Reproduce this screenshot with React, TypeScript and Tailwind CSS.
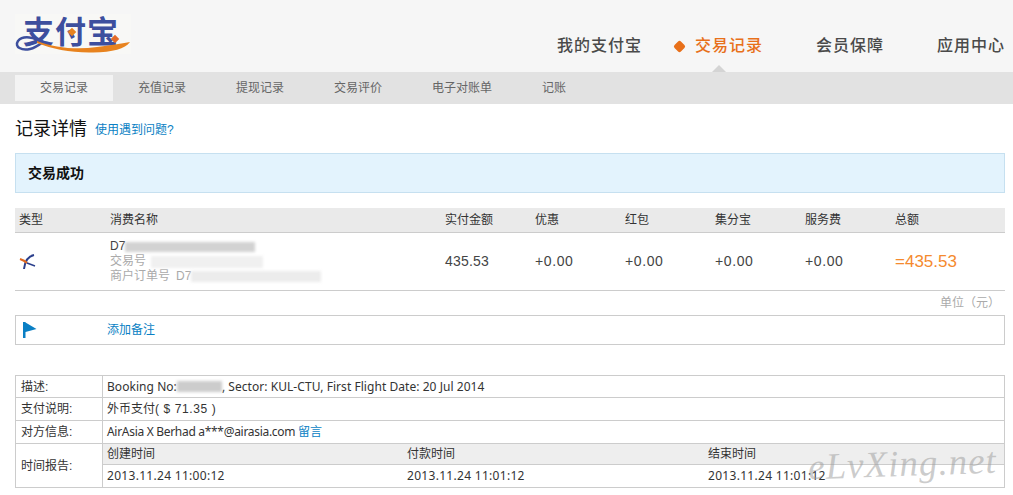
const font = { fontFamily: '"Liberation Sans", "Noto Sans CJK SC", sans-serif' };
const latin = { fontFamily: '"Noto Sans", "Noto Sans CJK SC", sans-serif' };

const tabs = ["交易记录", "充值记录", "提现记录", "交易评价", "电子对账单", "记账"];
const heads = ["类型", "消费名称", "实付金额", "优惠", "红包", "集分宝", "服务费", "总额"];
const colWidths = "grid-cols-[95px_335px_90px_90px_90px_90px_90px_1fr]";

function Logo() {
  return (
    <div className="relative h-[40px] w-[116px] bg-[#f8f8f6]">
      <span className="absolute left-[8px] top-[1px] text-[31px] leading-[36px] font-bold tracking-[1px] text-[#3d4f9e]">支付宝</span>
      <svg viewBox="0 0 116 40" className="absolute left-0 top-0 h-[40px] w-[116px]">
        <path d="M27 29 C20 23 8 21 3 27 C-1 33 7 37 15 35 C20 34 24 31 28 28" fill="none" stroke="#3d4f9e" strokeWidth="2.500" />
        <path d="M22 27 C40 34 62 36 82 33 C95 31 106 30 115 28 C110 35 98 38 78 38.500 C56 39 38 35 22 29 Z" fill="#e8831f" />
        <rect x="54" y="15" width="6" height="6" transform="rotate(45 57 18)" fill="#e8831f" />
        <rect x="97" y="22" width="6" height="6" transform="rotate(45 100 25)" fill="#e26a28" />
      </svg>
    </div>
  );
}

function Blur({ className }: { className: string }) {
  return <span className={"inline-block blur-[1.5px] " + className} />;
}

function AirIcon() {
  return (
    <svg viewBox="0 0 18 18" className="h-[18px] w-[18px]">
      <path d="M15 2 C10 3 6 7 5 16" fill="none" stroke="#2b3f8c" strokeWidth="2" />
      <path d="M1 6 C4 7 6 8 8 10" fill="none" stroke="#e06a20" strokeWidth="2" />
      <path d="M8 10 L16 13" fill="none" stroke="#2b3f8c" strokeWidth="1.500" />
    </svg>
  );
}

function FlagIcon() {
  return (
    <svg viewBox="0 0 14 16" className="h-[16px] w-[14px]">
      <path d="M0 0 H2.500 V16 H0 Z M2.500 0.500 L13.500 7 L2.500 10 Z" fill="#0a7fc4" />
    </svg>
  );
}

export default function App() {
  return (
    <div style={font} className="relative h-[495px] w-[1013px] overflow-hidden bg-white text-[12px] text-[#333]">
      <header className="relative flex h-[72px] items-start justify-between bg-[#f6f6f6] pl-[15px] pr-[8px]">
        <div className="pt-[14px]"><Logo /></div>
        <nav className="flex items-center pt-[36px] text-[16px] leading-[20px] tracking-[1px] text-[#4a4a4a] font-medium">
          <span>我的支付宝</span>
          <span className="ml-[33px] h-[9px] w-[9px] rotate-45 rounded-[2px] bg-[#e8701a]" />
          <span className="ml-[11px] text-[#e8701a]">交易记录</span>
          <span className="ml-[53px]">会员保障</span>
          <span className="ml-[53px]">应用中心</span>
        </nav>
        <span className="absolute left-[712px] top-[65px] h-0 w-0 border-x-[7px] border-b-[7px] border-x-transparent border-b-[#d4d4d4]" />
      </header>

      <div className="flex h-[32px] items-center bg-[#e2e2e2] pl-[15px] text-[#666]">
        {tabs.map((t, i) => (
          <div key={t} className={"flex h-[26px] items-center px-[25px] " + (i === 0 ? "bg-[#f3f3f3]" : "")}>{t}</div>
        ))}
      </div>

      <main className="pl-[15px] pr-[8px]">
        <div className="flex h-[49px] items-center pt-[2px]">
          <h1 className="text-[18px] font-normal text-[#111]">记录详情</h1>
          <a className="ml-[8px] pt-[1px] text-[#0a7fc4]">使用遇到问题?</a>
        </div>

        <div className="flex h-[40px] items-center border border-[#c6e0f0] bg-[#e3f3fd] pl-[12px] text-[14px] font-bold text-[#111]">交易成功</div>

        <div className={"mt-[15px] grid h-[25px] items-center border-b border-[#ccc] bg-[#eaeaea] " + colWidths}>
          {heads.map((h, i) => (
            <div key={h} className={i === 0 ? "pl-[4px]" : ""}>{h}</div>
          ))}
        </div>

        <div className={"grid h-[58px] items-center border-b border-[#ccc] text-[14px] text-[#444] " + colWidths}>
          <div className="pl-[4px]"><AirIcon /></div>
          <div className="text-[12px] leading-[15px] text-[#aaa]">
            <div className="flex items-center text-[#444]">D7<Blur className="h-[10px] w-[130px] bg-[#d2d2d2]" /></div>
            <div className="flex items-center">交易号<Blur className="ml-[5px] h-[12px] w-[112px] bg-[#f0f0f0]" /></div>
            <div className="flex items-center">商户订单号<span className="ml-[6px]">D7</span><Blur className="h-[11px] w-[130px] bg-[#ececec]" /></div>
          </div>
          <div className="tracking-[0.2px]">435.53</div>
          <div className="tracking-[0.6px]">+0.00</div>
          <div className="tracking-[0.6px]">+0.00</div>
          <div className="tracking-[0.6px]">+0.00</div>
          <div className="tracking-[0.6px]">+0.00</div>
          <div className="text-[17px] text-[#f58a2e]">=435.53</div>
        </div>

        <div className="flex h-[24px] items-center justify-end pr-[5px] text-[#aaa]">单位（元）</div>

        <div className="flex h-[30px] items-center border border-[#ccc] pl-[7px]">
          <FlagIcon />
          <a className="ml-[70px] text-[#0a7fc4]">添加备注</a>
        </div>

        <table className="mt-[30px] w-full table-fixed border-collapse border border-[#ccc]">
          <colgroup>
            <col className="w-[87px]" />
            <col />
          </colgroup>
          <tbody>
            <tr className="h-[22px] border-b border-[#ccc]">
              <td className="border-r border-[#ccc] pl-[5px]">描述:</td>
              <td className="pl-[4px]">
                <span className="flex items-center tracking-[0.05px]" style={latin}>
                  Booking No:<Blur className="h-[11px] w-[45px] bg-[#cccccc]" />, Sector: KUL-CTU, First Flight Date: 20 Jul 2014
                </span>
              </td>
            </tr>
            <tr className="h-[23px] border-b border-[#ccc]">
              <td className="border-r border-[#ccc] pl-[5px]">支付说明:</td>
              <td className="pl-[4px]">外币支付<span className="tracking-[0.6px]">( $ 71.35 )</span></td>
            </tr>
            <tr className="h-[23px] border-b border-[#ccc]">
              <td className="border-r border-[#ccc] pl-[5px]">对方信息:</td>
              <td className="pl-[4px]">
                <span className="tracking-[-0.3px]" style={latin}>AirAsia X Berhad a***@airasia.com </span>
                <a className="text-[#0a7fc4]">留言</a>
              </td>
            </tr>
            <tr>
              <td className="border-r border-[#ccc] pl-[5px]">时间报告:</td>
              <td className="p-0">
                <div className="grid h-[21px] grid-cols-[300px_301px_1fr] items-center border-b border-[#ccc] bg-[#eeeeee] pl-[4px]">
                  <span>创建时间</span><span>付款时间</span><span>结束时间</span>
                </div>
                <div className="grid h-[22px] grid-cols-[300px_301px_1fr] items-center pl-[4px] tracking-[0.3px]" style={latin}>
                  <span>2013.11.24 11:00:12</span><span>2013.11.24 11:01:12</span><span>2013.11.24 11:01:12</span>
                </div>
              </td>
            </tr>
          </tbody>
        </table>
      </main>

      <span
        className="absolute left-[808px] top-[440px] -rotate-2 text-[37px] leading-[48px] italic text-[#9a9a9a]/50 tracking-[1px]"
        style={{ fontFamily: '"Liberation Serif", serif' }}
      >
        eLvXing.net
      </span>
    </div>
  );
}
